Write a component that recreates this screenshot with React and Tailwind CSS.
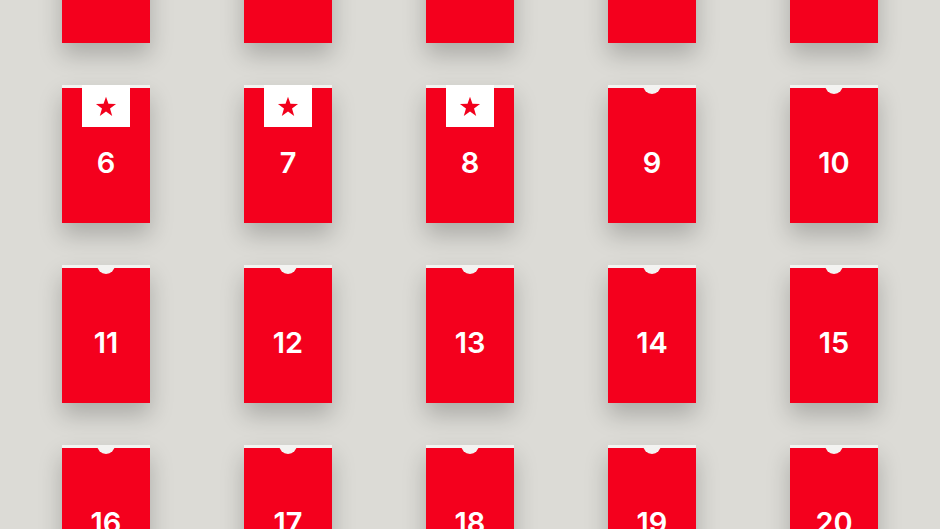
import React from "react";

function Star() {
  return (
    <svg width="22" height="21" viewBox="0 0 24 23" className="block">
      <path
        d="M12 0.8 L14.7 8.6 L23 8.8 L16.4 13.8 L18.8 21.8 L12 17.1 L5.2 21.8 L7.6 13.8 L1 8.8 L9.3 8.6 Z"
        fill="#f2001c"
      />
    </svg>
  );
}

function Card({ n, opened, hidden }) {
  return (
    <div className="relative overflow-hidden w-[88px] h-[138px] bg-[#f4001d] shadow-[0_12px_22px_rgba(0,0,0,0.22)] flex items-center justify-center pt-[16px]">
      <div className="absolute left-0 right-0 top-0 h-[3px] bg-[#f3f3f1]" />
      {opened ? (
        <div className="absolute left-[20px] top-0 w-[48px] h-[42px] bg-white flex items-center justify-center">
          <Star />
        </div>
      ) : (
        <div className="absolute left-[35px] top-[-9px] w-[18px] h-[18px] rounded-full bg-[#f3f3f1]" />
      )}
      {!hidden && (
        <span
          className="text-white text-[29px] font-semibold leading-none"
          style={{ fontFamily: "Inter, 'Noto Sans', sans-serif" }}
        >
          {n}
        </span>
      )}
    </div>
  );
}

export default function App() {
  const rows = [
    [1, 2, 3, 4, 5],
    [6, 7, 8, 9, 10],
    [11, 12, 13, 14, 15],
    [16, 17, 18, 19, 20],
  ];
  const opened = [1, 2, 3, 4, 5, 6, 7, 8];
  return (
    <div className="w-[940px] h-[529px] overflow-hidden bg-[#dcdbd6]">
      <div className="flex flex-col gap-[42px] pl-[62px] mt-[-95px]">
        {rows.map((r, i) => (
          <div key={i} className="flex gap-[94px]">
            {r.map((n) => (
              <Card key={n} n={n} opened={opened.includes(n)} hidden={i === 0} />
            ))}
          </div>
        ))}
      </div>
    </div>
  );
}
